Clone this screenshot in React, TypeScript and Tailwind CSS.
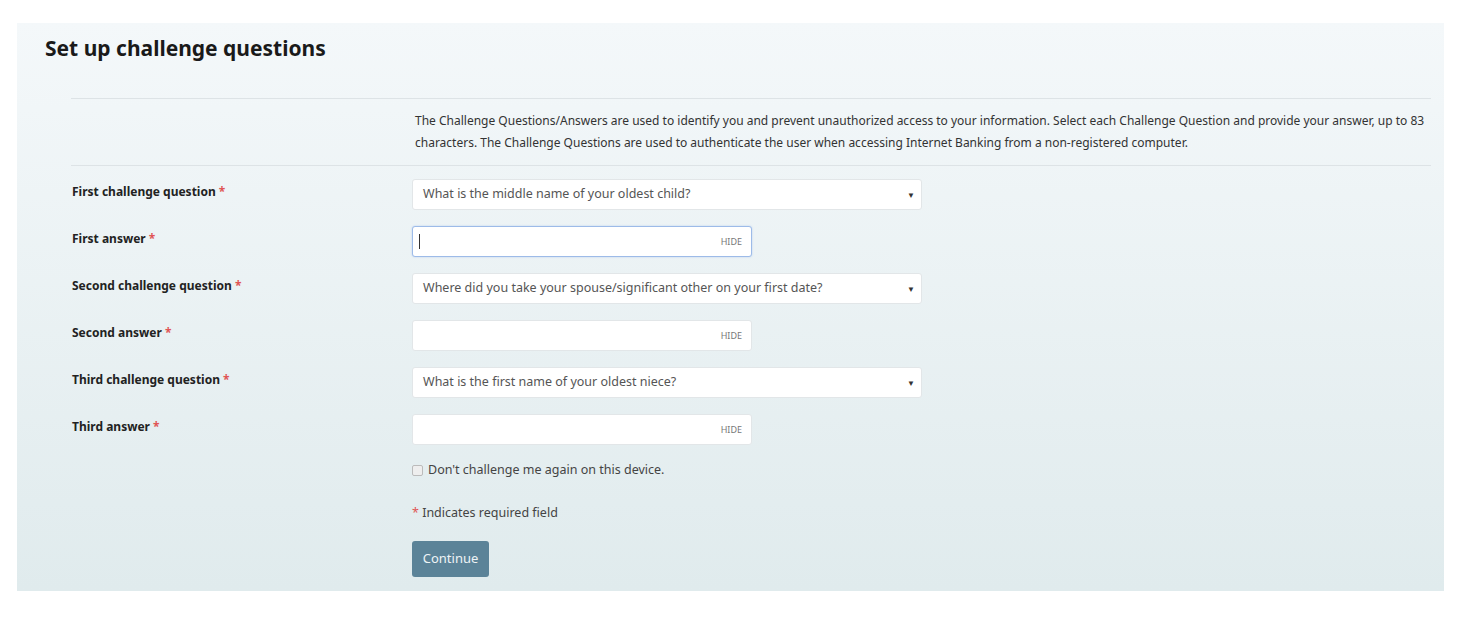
const questions = [
  { label: "First challenge question", type: "select", value: "What is the middle name of your oldest child?" },
  { label: "First answer", type: "answer", focused: true },
  { label: "Second challenge question", type: "select", value: "Where did you take your spouse/significant other on your first date?" },
  { label: "Second answer", type: "answer" },
  { label: "Third challenge question", type: "select", value: "What is the first name of your oldest niece?" },
  { label: "Third answer", type: "answer" },
];

function Field({ q }: { q: (typeof questions)[number] }) {
  if (q.type === "select") {
    return (
      <div className="flex h-[31px] w-[510px] items-center justify-between rounded-[3px] border border-[#e2e6e8] bg-white pl-[10px] pr-[6px] text-[12.5px] text-[#555]">
        <span>{q.value}</span>
        <span className="text-[8px] text-[#333]">▼</span>
      </div>
    );
  }
  return (
    <div
      className={
        "flex h-[31px] w-[340px] items-center justify-between rounded-[3px] border bg-white pl-[6px] pr-[9px] " +
        (q.focused ? "border-[#9dbbe8] shadow-[0_0_2px_#b7cdf0]" : "border-[#e2e6e8]")
      }
    >
      <span className="h-[15px] w-px bg-[#333]" style={{ opacity: q.focused ? 1 : 0 }} />
      <span className="text-[9px] text-[#777]">HIDE</span>
    </div>
  );
}

export default function App() {
  return (
    <div className="min-h-[621px] bg-white pt-[23px] pl-[17px] pr-[24px] font-['Liberation_Sans',Arial,sans-serif]">
      <div className="h-[568px] bg-gradient-to-b from-[#f4f8fa] to-[#e0ebed] pt-[8px]">
        <h1 className="pl-[28px] text-[21px] font-bold leading-[34px] text-[#1a1a1a]">Set up challenge questions</h1>
        <div className="ml-[54px] mr-[13px] mt-[33px] border-t border-[#dde3e6]">
          <p className="ml-[344px] py-[11px] text-[12px] leading-[22px] text-[#333]">
            The Challenge Questions/Answers are used to identify you and prevent unauthorized access to your information. Select each Challenge Question and provide your answer, up to 83 characters. The Challenge Questions are used to authenticate the user when accessing Internet Banking from a non-registered computer.
          </p>
          <div className="border-t border-[#dde3e6] pt-[13px]">
            {questions.map((q) => (
              <div key={q.label} className="mb-[16px] flex items-start">
                <div className="w-[341px] pl-px pt-[4px] text-[12px] font-bold text-[#222]">
                  {q.label} <span className="text-[#e05555]">*</span>
                </div>
                <Field q={q} />
              </div>
            ))}
            <div className="ml-[341px] mt-[6px] flex items-center gap-[5px] text-[12.5px] text-[#444]">
              <span className="h-[11px] w-[11px] rounded-[2px] border border-[#bbb] bg-[#eee]" />
              Don't challenge me again on this device.
            </div>
            <div className="ml-[341px] mt-[24px] text-[12.5px] text-[#444]">
              <span className="text-[#e05555]">*</span> Indicates required field
            </div>
            <button className="ml-[341px] mt-[18px] h-[36px] w-[77px] rounded-[3px] bg-[#5b8398] text-[13px] text-[#eef3f6]">
              Continue
            </button>
          </div>
        </div>
      </div>
    </div>
  );
}
